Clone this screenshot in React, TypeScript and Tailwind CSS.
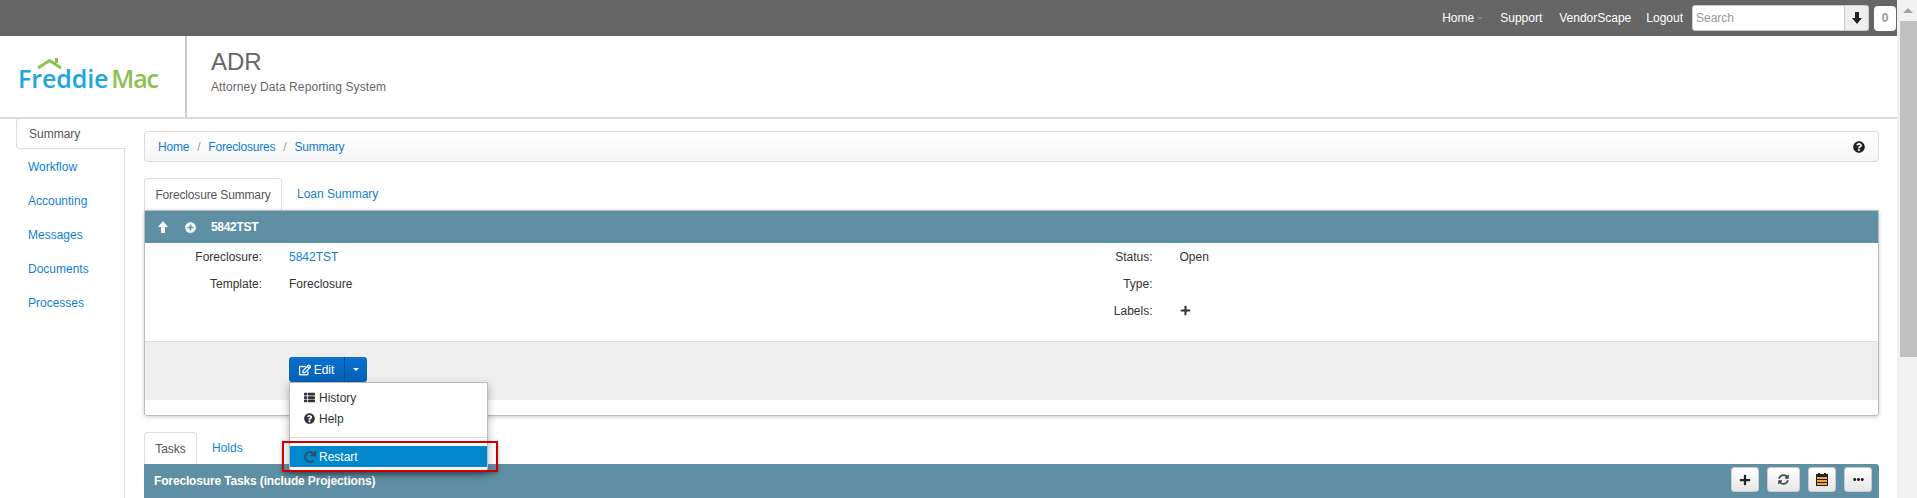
import { FaEllipsisH, FaPlus, FaPlusCircle, FaQuestionCircle, FaRedo, FaRegEdit, FaSyncAlt, FaThList } from "react-icons/fa";

const sideItems = ["Workflow", "Accounting", "Messages", "Documents", "Processes"];

function ArrowIcon({ down = false }: { down?: boolean }) {
    return (
        <svg width="10" height="12" viewBox="0 0 10 12" className={down ? "rotate-180" : ""}>
            <path d="M5 0 L10 6 H7 V12 H3 V6 H0 Z" fill="currentColor" />
        </svg>
    );
}

function CalendarIcon() {
    return (
        <svg width="12" height="13" viewBox="0 0 12 13">
            <rect x="0" y="1" width="12" height="12" fill="#222" />
            <rect x="2" y="0" width="2" height="2" fill="#222" />
            <rect x="8" y="0" width="2" height="2" fill="#222" />
            <rect x="1" y="4" width="10" height="2" fill="#f0a63a" />
            <rect x="1" y="7" width="10" height="2" fill="#f0a63a" />
            <rect x="1" y="10" width="10" height="2" fill="#f0a63a" />
        </svg>
    );
}

function Logo() {
    return (
        <div className="relative w-[135px] h-[34px] font-['Open_Sans',sans-serif] text-[25px] leading-[34px] font-semibold whitespace-nowrap">
            <svg className="absolute left-[19px] top-0" width="25" height="11" viewBox="0 0 25 11">
                <path d="M1 10 L12.5 2.5 L24 10" fill="none" stroke="#8cc152" strokeWidth="3" />
                <rect x="18" y="0" width="3" height="5" fill="#8cc152" />
            </svg>
            <div className="absolute left-0 top-[3px]">
                <span className="text-[#1ba6df] tracking-[-0.1px]">Freddie</span>
                <span className="text-[#8cc152] ml-[3px] tracking-[-1.2px]">Mac</span>
            </div>
        </div>
    );
}

function ToolButton({ children, width }: { children: React.ReactNode; width: string }) {
    return (
        <button className={`${width} h-[25px] flex items-center justify-center rounded-[3px] border border-[#ccc] bg-gradient-to-b from-white to-[#e6e6e6] text-[#222]`}>
            {children}
        </button>
    );
}

export default function App() {
    return (
        <div className="flex w-[1917px] h-[498px] overflow-hidden bg-white font-['Liberation_Sans',Arial,sans-serif] text-[12px] text-[#333]">
            <div className="w-[1897px] shrink-0 flex flex-col">
                {/* top bar */}
                <div className="h-[36px] shrink-0 bg-[#666] flex items-center justify-end pr-[1px] text-white">
                    <div className="flex items-center mr-[9px]">
                        <span>Home</span>
                        <span className="ml-[3px] mt-[1px] w-0 h-0 border-x-[3px] border-x-transparent border-t-[3px] border-t-[#888]" />
                        <span className="ml-[17px]">Support</span>
                        <span className="ml-[17px]">VendorScape</span>
                        <span className="ml-[15px]">Logout</span>
                    </div>
                    <div className="flex h-[26px]">
                        <div className="w-[153px] bg-white border border-[#ccc] rounded-l-[3px] pl-[3px] flex items-center text-[#999]">Search</div>
                        <div className="w-[24px] bg-[#eee] border border-[#ccc] border-l-0 rounded-r-[3px] flex items-center justify-center text-[#222]">
                            <ArrowIcon down />
                        </div>
                    </div>
                    <div className="ml-[5px] w-[22px] h-[25px] bg-white rounded-[4px] flex items-center justify-center font-bold text-[#999]">0</div>
                </div>

                {/* header */}
                <div className="h-[83px] shrink-0 flex border-b-2 border-[#d9d9d9]">
                    <div className="w-[187px] shrink-0 border-r-2 border-[#ccc] pl-[18px] pt-[22px]">
                        <Logo />
                    </div>
                    <div className="pl-[24px] pt-[11px] text-[#666]">
                        <div className="text-[24px] leading-[30px]">ADR</div>
                        <div className="mt-[2px] leading-[16px] tracking-[0.1px]">Attorney Data Reporting System</div>
                    </div>
                </div>

                <div className="flex flex-1 min-h-0">
                    {/* side nav */}
                    <div className="w-[125px] shrink-0 pl-[16px]">
                        <div className="h-[31px] -mt-[1px] bg-white border border-r-0 border-[#ddd] rounded-l-[4px] pl-[12px] flex items-center text-[#555] relative z-10 w-[110px]">Summary</div>
                        <div className="border-r border-[#ddd] h-[350px] pt-[1px] text-[#0f7fd0]">
                            {sideItems.map((item) => (
                                <div key={item} className="h-[34px] pl-[12px] flex items-center">{item}</div>
                            ))}
                        </div>
                    </div>

                    {/* content */}
                    <div className="flex-1 min-w-0 pl-[19px] pr-[18px] pt-[12px] flex flex-col">
                        <div className="h-[31px] shrink-0 border border-[#ddd] rounded-[3px] bg-gradient-to-b from-white to-[#f5f5f5] flex items-center px-[13px] text-[#0f7fd0] tracking-[-0.2px]">
                            <span>Home</span>
                            <span className="mx-[8px] text-[#999]">/</span>
                            <span>Foreclosures</span>
                            <span className="mx-[8px] text-[#999]">/</span>
                            <span>Summary</span>
                            <FaQuestionCircle size={12} className="ml-auto text-[#222]" />
                        </div>

                        <div className="mt-[16px] h-[32px] shrink-0 flex">
                            <div className="w-[138px] border border-b-0 border-[#ddd] rounded-t-[4px] flex items-center justify-center text-[#555] tracking-[-0.15px]">Foreclosure Summary</div>
                            <div className="ml-[15px] flex items-center text-[#0f7fd0]">Loan Summary</div>
                        </div>

                        {/* summary panel */}
                        <div className="h-[206px] shrink-0 border border-[#bbb] rounded-b-[3px] shadow-[0_1px_4px_rgba(0,0,0,0.2)] flex flex-col">
                            <div className="h-[32px] shrink-0 bg-[#5f8fa3] flex items-center pl-[13px] text-white font-bold">
                                <ArrowIcon />
                                <FaPlusCircle size={11} className="ml-[17px]" />
                                <span className="ml-[15px] tracking-[-0.3px]">5842TST</span>
                            </div>
                            <div className="h-[99px] shrink-0 grid grid-cols-[1fr_1fr] border-b border-[#ddd]">
                                <div>
                                    <div className="h-[27px] flex items-center">
                                        <span className="w-[117px] text-right">Foreclosure:</span>
                                        <span className="ml-[27px] text-[#0f7fd0]">5842TST</span>
                                    </div>
                                    <div className="h-[27px] flex items-center">
                                        <span className="w-[117px] text-right">Template:</span>
                                        <span className="ml-[27px]">Foreclosure</span>
                                    </div>
                                </div>
                                <div className="pl-[51px]">
                                    <div className="h-[27px] flex items-center">
                                        <span className="w-[90px] text-right">Status:</span>
                                        <span className="ml-[27px]">Open</span>
                                    </div>
                                    <div className="h-[27px] flex items-center">
                                        <span className="w-[90px] text-right">Type:</span>
                                    </div>
                                    <div className="h-[27px] flex items-center">
                                        <span className="w-[90px] text-right">Labels:</span>
                                        <FaPlus size={11} className="ml-[27px] text-[#333]" />
                                    </div>
                                </div>
                            </div>
                            <div className="h-[58px] shrink-0 bg-[#eee] pl-[144px] pt-[15px] relative">
                                <div className="flex w-[78px] h-[25px] rounded-[3px] bg-gradient-to-b from-[#0a70d0] to-[#0560b5] text-white">
                                    <div className="w-[56px] flex items-center justify-center border-r border-[#04508f]">
                                        <FaRegEdit size={12} stroke="currentColor" strokeWidth={15} />
                                        <span className="ml-[3px]">Edit</span>
                                    </div>
                                    <div className="flex-1 flex items-center justify-center">
                                        <span className="w-0 h-0 border-x-[3px] border-x-transparent border-t-[3px] border-t-white" />
                                    </div>
                                </div>

                                {/* dropdown menu */}
                                <div className="absolute left-[144px] top-[40px] w-[199px] h-[89px] z-20 bg-white border border-[#bbb] rounded-b-[3px] shadow-[0_4px_8px_rgba(0,0,0,0.3)] pt-[4px] text-[#333]">
                                    <div className="h-[21px] flex items-center pl-[14px]">
                                        <FaThList size={11} className="text-[#333]" />
                                        <span className="ml-[4px]">History</span>
                                    </div>
                                    <div className="h-[21px] flex items-center pl-[14px]">
                                        <FaQuestionCircle size={11} className="text-[#333]" />
                                        <span className="ml-[4px]">Help</span>
                                    </div>
                                    <div className="mt-[8px] border-t border-[#ddd]" />
                                    <div className="mt-[8px] h-[21px] bg-[#0087cc] flex items-center pl-[14px] text-white">
                                        <FaRedo size={12} className="text-[#2e4a5c]" />
                                        <span className="ml-[3px]">Restart</span>
                                    </div>
                                    <div className="absolute left-[-8px] top-[58px] w-[216px] h-[31px] border-[2px] border-[#c00] shadow-[0_2px_4px_rgba(0,0,0,0.3)]" />
                                </div>
                            </div>
                        </div>

                        <div className="mt-[16px] h-[32px] shrink-0 flex">
                            <div className="w-[53px] border border-b-0 border-[#ddd] rounded-t-[4px] flex items-center justify-center text-[#555]">Tasks</div>
                            <div className="ml-[15px] flex items-center text-[#0f7fd0]">Holds</div>
                        </div>

                        {/* tasks header */}
                        <div className="h-[34px] shrink-0 bg-[#5f8fa3] rounded-tr-[3px] flex items-center pl-[10px] pr-[7px] text-white font-bold">
                            <span className="tracking-[-0.15px]">Foreclosure Tasks (include Projections)</span>
                            <div className="ml-auto self-start mt-[3px] flex gap-[8px]">
                                <ToolButton width="w-[28px]"><FaPlus size={12} /></ToolButton>
                                <ToolButton width="w-[33px]"><FaSyncAlt size={11} className="text-[#444]" /></ToolButton>
                                <ToolButton width="w-[28px]"><CalendarIcon /></ToolButton>
                                <ToolButton width="w-[28px]"><FaEllipsisH size={11} /></ToolButton>
                            </div>
                        </div>
                    </div>
                </div>
            </div>

            {/* scrollbar */}
            <div className="w-[20px] shrink-0 bg-[#f1f1f1] flex flex-col items-center pl-[2px]">
                <span className="mt-[8px] w-0 h-0 border-x-[5px] border-x-transparent border-b-[5px] border-b-[#a3a3a3]" />
                <div className="mt-[8px] w-[17px] h-[336px] bg-[#c1c1c1]" />
            </div>
        </div>
    );
}
